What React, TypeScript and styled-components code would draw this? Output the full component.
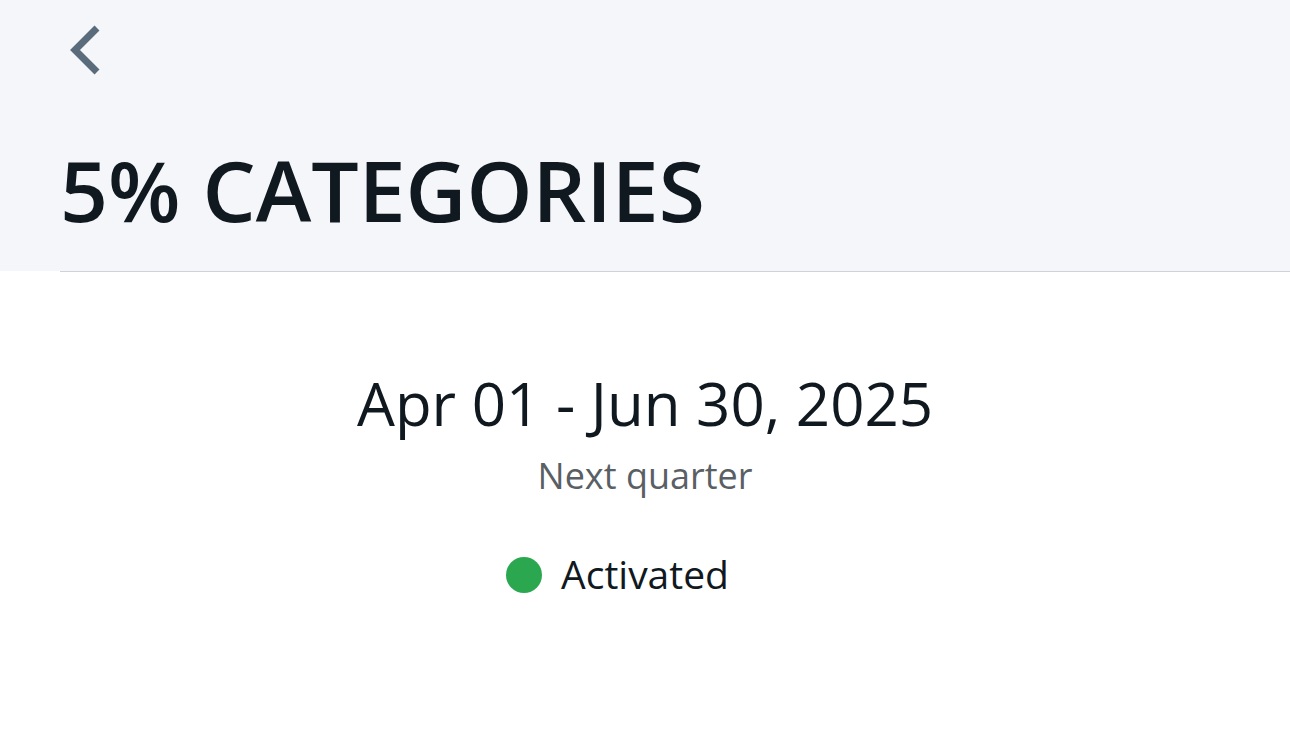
import React from 'react';
import styled, { createGlobalStyle } from 'styled-components';

const GlobalStyle = createGlobalStyle`
  html, body {
    margin: 0;
    padding: 0;
    background: #ffffff;
    font-family: "Open Sans", "Noto Sans", sans-serif;
  }
`;

const Page = styled.div`
  width: 1290px;
  min-height: 739px;
  background: #ffffff;
`;

const Header = styled.header`
  background: #f5f6fa;
  height: 271px;
  padding-left: 60px;
  box-sizing: border-box;
  display: flex;
  flex-direction: column;
`;

const BackButton = styled.button`
  width: 40px;
  height: 56px;
  margin-top: 23px;
  margin-left: 4px;
  padding: 0;
  border: none;
  background: transparent;
  cursor: pointer;
  display: flex;
  align-self: flex-start;
`;

const Title = styled.h1`
  margin: 69px 0 0 0;
  font-size: 84px;
  line-height: 1;
  font-weight: 600;
  color: #101820;
`;

const Divider = styled.hr`
  margin: 0 0 0 60px;
  border: none;
  height: 1px;
  background: #cfd2d8;
`;

const Body = styled.main`
  display: flex;
  flex-direction: column;
  align-items: center;
  padding-top: 95px;
`;

const DateRange = styled.div`
  font-size: 60px;
  line-height: 1.2;
  color: #101820;
`;

const Period = styled.div`
  margin-top: 15px;
  font-size: 36px;
  line-height: 1.2;
  color: #5a5f65;
`;

const Status = styled.div`
  position: relative;
  margin-top: 54px;
  font-size: 39px;
  line-height: 1.2;
  color: #101820;
`;

const Dot = styled.span<{ $color: string }>`
  position: absolute;
  left: -55px;
  top: 50%;
  width: 36px;
  height: 36px;
  margin-top: -18px;
  border-radius: 50%;
  background: ${p => p.$color};
`;

const App: React.FC = () => {
  return (
    <Page>
      <GlobalStyle />
      <Header>
        <BackButton aria-label="Back">
          <svg width="40" height="56" viewBox="0 0 40 56">
            <path d="M33 5 L11 27 L33 49" fill="none" stroke="#5a6b7b" strokeWidth="7" strokeLinejoin="miter" />
          </svg>
        </BackButton>
        <Title>5% CATEGORIES</Title>
      </Header>
      <Divider />
      <Body>
        <DateRange>Apr 01 - Jun 30, 2025</DateRange>
        <Period>Next quarter</Period>
        <Status>
          <Dot $color="#2ba84f" />
          Activated
        </Status>
      </Body>
    </Page>
  );
};

export default App;
